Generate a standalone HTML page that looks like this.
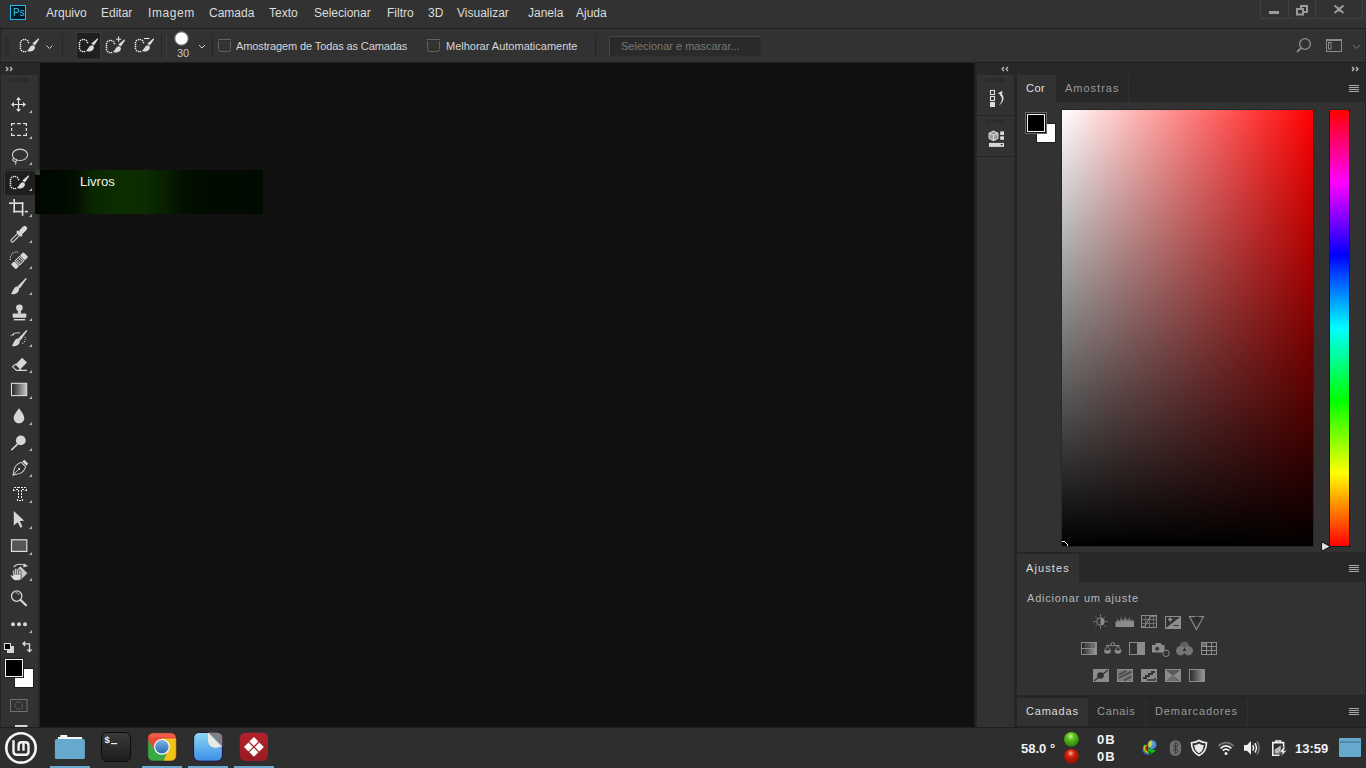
<!DOCTYPE html>
<html><head><meta charset="utf-8">
<style>
*{margin:0;padding:0;box-sizing:border-box}
html,body{width:1366px;height:768px;overflow:hidden;background:#111;font-family:"Liberation Sans",sans-serif}
.a{position:absolute}
.t{position:absolute;white-space:nowrap;line-height:1}
svg{position:absolute;overflow:visible}
</style></head><body>
<!-- menu bar -->
<div class="a" style="left:0;top:0;width:1366px;height:28px;background:#323232"></div>
<div class="a" style="left:0;top:28px;width:1366px;height:1px;background:#1e1e1e"></div>
<!-- PS logo -->
<div class="a" style="left:10px;top:5px;width:16px;height:15px;background:#001a24;border:1.5px solid #2ab8ec"></div>
<div class="t" style="left:13px;top:7.5px;font-size:10px;color:#34c0f0">Ps</div>
<div id="menu" style="font-size:12px;color:#dcdcdc">
<div class="t" style="left:46px;top:7px">Arquivo</div>
<div class="t" style="left:101px;top:7px">Editar</div>
<div class="t" style="left:148px;top:7px;letter-spacing:.6px">Imagem</div>
<div class="t" style="left:209px;top:7px">Camada</div>
<div class="t" style="left:269px;top:7px">Texto</div>
<div class="t" style="left:314px;top:7px">Selecionar</div>
<div class="t" style="left:387px;top:7px">Filtro</div>
<div class="t" style="left:428px;top:7px">3D</div>
<div class="t" style="left:457px;top:7px">Visualizar</div>
<div class="t" style="left:528px;top:7px">Janela</div>
<div class="t" style="left:576px;top:7px">Ajuda</div>
</div>
<!-- options bar -->
<div class="a" style="left:0;top:29px;width:1366px;height:33px;background:#323232"></div>
<div class="a" style="left:0;top:62px;width:1366px;height:1px;background:#1e1e1e"></div>
<div class="a" style="left:0;top:29px;width:1px;height:33px;background:#262626"></div>
<div class="a" style="left:1365px;top:29px;width:1px;height:33px;background:#262626"></div>
<!-- grip -->
<svg style="left:0;top:0" width="1366" height="768">
<defs>
<g id="qs">
 <g fill="#ececec">
 <circle cx="2.5" cy="3.5" r=".85"/><circle cx="4.5" cy="2.5" r=".85"/><circle cx="6.5" cy="2.5" r=".85"/><circle cx="8.5" cy="3.5" r=".85"/><circle cx="9.5" cy="5.5" r=".85"/>
 <circle cx="1.5" cy="5.5" r=".85"/><circle cx="1.5" cy="7.5" r=".85"/><circle cx="1.5" cy="9.5" r=".85"/><circle cx="1.5" cy="11.5" r=".85"/><circle cx="2.5" cy="13.5" r=".85"/><circle cx="4.5" cy="14.5" r=".85"/><circle cx="6.5" cy="14.5" r=".85"/>
 </g>
 <path fill="#dadada" d="M18.4,2.2 L19.2,1.6 C19.8,1.3 20.3,1.8 20,2.4 L15.9,8.4 L13.3,6.6 Z M15.4,9 C16.6,10.9 15.7,13.1 13.4,13.9 C11.8,14.5 9.8,14.5 8,14.3 C9.2,13 10.1,11 11.4,9.6 C12.7,8.3 14.5,7.8 15.4,9 Z"/>
</g>
</defs>
<g stroke="#262626" stroke-width="1">
 <line x1="5" y1="36.5" x2="9" y2="36.5"/><line x1="5" y1="38.5" x2="9" y2="38.5"/><line x1="5" y1="40.5" x2="9" y2="40.5"/><line x1="5" y1="42.5" x2="9" y2="42.5"/><line x1="5" y1="44.5" x2="9" y2="44.5"/><line x1="5" y1="46.5" x2="9" y2="46.5"/><line x1="5" y1="48.5" x2="9" y2="48.5"/><line x1="5" y1="50.5" x2="9" y2="50.5"/><line x1="5" y1="52.5" x2="9" y2="52.5"/><line x1="5" y1="54.5" x2="9" y2="54.5"/>
</g>
<use href="#qs" x="19" y="37"/>
<path d="M46.5,45.5 L49.5,48.5 L52.5,45.5" fill="none" stroke="#cfcfcf" stroke-width="1"/>
<line x1="62.5" y1="34" x2="62.5" y2="57" stroke="#262626"/>
<rect x="76.5" y="32.5" width="24" height="26.5" fill="#1f1f1f" stroke="#3a3a3a" stroke-width="1"/>
<use href="#qs" x="78" y="37"/>
<use href="#qs" x="105" y="38"/>
<path d="M118.6,36.5 V41.8 M116,39.2 H121.2" stroke="#e6e6e6" stroke-width="1.1"/>
<use href="#qs" x="134" y="37"/>
<path d="M144,38.5 H149.5" stroke="#e6e6e6" stroke-width="1.1"/>
<line x1="161.5" y1="34" x2="161.5" y2="57" stroke="#262626"/>
<line x1="166.5" y1="33" x2="166.5" y2="58" stroke="#3c3c3c"/>
<circle cx="181.5" cy="38.5" r="6.2" fill="#fff"/>
<circle cx="181.5" cy="38.5" r="6.8" fill="none" stroke="#ffffff" stroke-opacity=".35" stroke-width="1"/>
<path d="M199,45 L202,48 L205,45" fill="none" stroke="#cfcfcf" stroke-width="1"/>
<line x1="212.5" y1="34" x2="212.5" y2="57" stroke="#262626"/>
<g fill="#626262"><rect x="218" y="39" width="13" height="1"/><rect x="218" y="41" width="1" height="8"/><rect x="230" y="41" width="1" height="8"/><rect x="220" y="51" width="9" height="1"/><rect x="218" y="50" width="2" height="1"/><rect x="229" y="50" width="2" height="1"/></g>
<g fill="#626262"><rect x="427" y="39" width="13" height="1"/><rect x="427" y="41" width="1" height="8"/><rect x="439" y="41" width="1" height="8"/><rect x="429" y="51" width="9" height="1"/><rect x="427" y="50" width="2" height="1"/><rect x="438" y="50" width="2" height="1"/></g>
<line x1="595.5" y1="34" x2="595.5" y2="57" stroke="#262626"/>
<rect x="609" y="36" width="152" height="20" fill="#2a2a2a"/><path d="M609.5,56 V36.5 H761" fill="none" stroke="#474747"/><path d="M610,55.5 H760.5 V37" fill="none" stroke="#2c2c2c"/>
<!-- right icons -->
<circle cx="1305" cy="44" r="5.4" fill="none" stroke="#8a8a8a" stroke-width="1.4"/>
<path d="M1301.2,47.8 L1297.5,51.5" stroke="#8a8a8a" stroke-width="1.8" stroke-linecap="round"/>
<rect x="1326.5" y="39.5" width="15" height="12" fill="none" stroke="#8a8a8a" stroke-width="1"/>
<rect x="1326" y="39" width="16" height="2" fill="#8a8a8a"/>
<rect x="1328.5" y="42.5" width="2.5" height="6.5" fill="none" stroke="#8a8a8a" stroke-width="1"/>
<path d="M1353,45 L1356.5,48.5 L1360,45" fill="none" stroke="#777" stroke-width="1"/>
<!-- window controls -->
<path d="M1260.5,0 V18.5 H1362.5 V0 M1288.5,0 V18.5 M1315.5,0 V18.5" fill="none" stroke="#414141" stroke-width="1"/>
<rect x="1269" y="11" width="10" height="3" fill="#9a9a9a"/>
<rect x="1301" y="6" width="6" height="6" fill="none" stroke="#9a9a9a" stroke-width="2"/>
<rect x="1297" y="9" width="6" height="5.5" fill="#323232" stroke="#9a9a9a" stroke-width="2"/>
<path d="M1334.5,5.5 L1343.5,13 M1343.5,5.5 L1334.5,13" stroke="#9a9a9a" stroke-width="2"/>
<rect x="1337" y="7.5" width="4" height="4" fill="#9a9a9a"/>
</svg>
<div class="t" style="left:177px;top:48px;font-size:11px;color:#c4c8cc">30</div>
<div class="t" style="left:236px;top:41px;font-size:11px;color:#d6d6d6;letter-spacing:-0.12px">Amostragem de Todas as Camadas</div>
<div class="t" style="left:446px;top:41px;font-size:11px;color:#d6d6d6">Melhorar Automaticamente</div>
<div class="t" style="left:621px;top:41px;font-size:11px;color:#777">Selecionar e mascarar...</div>

<!-- toolbar -->
<div class="a" style="left:0;top:63px;width:40px;height:664px;background:#262626"></div>
<div class="a" style="left:1px;top:63px;width:37px;height:12px;background:#282828"></div>
<div class="a" style="left:1px;top:75px;width:37px;height:652px;background:#323232"></div>

<svg style="left:0;top:0" width="40" height="727">
<g fill="#b5b5b5"><path d="M32,110 V113 H29 Z"/><path d="M32,136 V139 H29 Z"/><path d="M32,162 V165 H29 Z"/><path d="M32,188 V191 H29 Z"/><path d="M32,214 V217 H29 Z"/><path d="M32,240 V243 H29 Z"/><path d="M32,266 V269 H29 Z"/><path d="M32,292 V295 H29 Z"/><path d="M32,318 V321 H29 Z"/><path d="M32,344 V347 H29 Z"/><path d="M32,370 V373 H29 Z"/><path d="M32,396 V399 H29 Z"/><path d="M32,422 V425 H29 Z"/><path d="M32,448 V451 H29 Z"/><path d="M32,474 V477 H29 Z"/><path d="M32,500 V503 H29 Z"/><path d="M32,526 V529 H29 Z"/><path d="M32,552 V555 H29 Z"/><path d="M32,578 V581 H29 Z"/><path d="M32,630 V633 H29 Z"/></g>
<!-- >> -->
<path d="M6,67 L8,69 L6,71 M10,67 L12,69 L10,71" fill="none" stroke="#bdbdbd" stroke-width="1.3"/>
<g stroke="#262626"><path d="M10.5,78 V82 M12.5,78 V82 M14.5,78 V82 M16.5,78 V82 M18.5,78 V82 M20.5,78 V82 M22.5,78 V82 M24.5,78 V82 M26.5,78 V82 M28.5,78 V82"/></g>
<g fill="#dedede" stroke="none">
<!-- move -->
<path d="M18.5,97 L21,100 H19.1 V103.9 H23 V102 L26,104.5 L23,107 V105.1 H19.1 V109 H21 L18.5,112 L16,109 H17.9 V105.1 H14 V107 L11,104.5 L14,102 V103.9 H17.9 V100 H16 Z"/>
</g>
<g fill="#e0e0e0">
<!-- marquee -->
<rect x="11" y="123" width="4" height="1.2"/><rect x="17" y="123" width="4" height="1.2"/><rect x="23" y="123" width="4" height="1.2"/>
<rect x="11" y="134.8" width="4" height="1.2"/><rect x="17" y="134.8" width="4" height="1.2"/><rect x="23" y="134.8" width="4" height="1.2"/>
<rect x="11" y="123" width="1.2" height="3"/><rect x="11" y="128" width="1.2" height="3"/><rect x="11" y="133" width="1.2" height="3"/>
<rect x="25.8" y="123" width="1.2" height="3"/><rect x="25.8" y="128" width="1.2" height="3"/><rect x="25.8" y="133" width="1.2" height="3"/>
</g>
<!-- lasso -->
<g fill="none" stroke="#d4d4d4" stroke-width="1.1">
<ellipse cx="20" cy="154.8" rx="7.6" ry="5.7"/>
<path d="M14.5,158.5 C12,158.5 12.3,161.5 15,161.5 C17,161.5 17,159.5 15.8,159 M15.5,161.5 C16.2,162.5 16,163.8 15,164.3"/>
</g>
<!-- quick selection active button -->
<rect x="5" y="170" width="30" height="25" fill="#1f1f1f"/>
<rect x="5" y="169" width="30" height="1" fill="#232323"/><rect x="5" y="170" width="30" height="1" fill="#3a3a3a"/>
<rect x="3" y="170" width="1" height="25" fill="#262626"/><rect x="4" y="170" width="1" height="25" fill="#3a3a3a"/>
<use href="#qs" x="9" y="174"/>
<path d="M32,188 V191 H29 Z" fill="#b5b5b5"/>
<!-- crop -->
<g fill="#e2e2e2">
<rect x="9" y="202.4" width="4.4" height="1.6"/><rect x="13.4" y="199" width="1.6" height="13.4"/><rect x="13.4" y="210.8" width="10" height="1.6"/><rect x="21.8" y="202.4" width="1.6" height="13.4"/><rect x="15" y="202.4" width="8.4" height="1.6"/><rect x="24.8" y="210.8" width="3" height="1.6"/>
</g>
<!-- eyedropper -->
<g transform="rotate(-45 19 234)">
<rect x="8.3" y="232.6" width="10.5" height="2.8" rx="1.4" fill="none" stroke="#d8d8d8" stroke-width="1.1"/>
<rect x="18.3" y="230.6" width="2.6" height="6.8" fill="#d8d8d8"/>
<rect x="20.4" y="231.6" width="9" height="4.8" rx="2.2" fill="#d8d8d8"/>
</g>
<!-- healing -->
<g transform="rotate(-45 19.6 260.7)">
<rect x="23.6" y="257.2" width="4.8" height="7" rx="1.3" fill="#d8d8d8"/>
<rect x="10.8" y="257.2" width="4.6" height="7" rx="1.3" fill="#d8d8d8"/>
<rect x="16.5" y="257.7" width="6.2" height="6" fill="none" stroke="#d8d8d8" stroke-width="1"/>
<g fill="#d8d8d8"><circle cx="18.4" cy="259.6" r=".85"/><circle cx="20.8" cy="259.6" r=".85"/><circle cx="18.4" cy="261.8" r=".85"/><circle cx="20.8" cy="261.8" r=".85"/></g>
</g>
<g fill="#d8d8d8"><circle cx="10.2" cy="259.4" r=".65"/><circle cx="10.4" cy="257" r=".65"/><circle cx="11.4" cy="254.8" r=".65"/><circle cx="13" cy="253" r=".65"/><circle cx="15" cy="252.1" r=".65"/><circle cx="17.2" cy="251.9" r=".65"/></g>
<!-- brush -->
<g fill="#d6d6d6">
<path d="M25.5,278.2 C26,277.8 26.8,278.4 26.5,279 L19.75,288.4 L17.45,286.4 Z"/>
<path d="M17.6,286.6 C19.8,287.8 19.5,291.3 17.2,292.9 C15.4,294.1 12.8,294.4 10.9,294 C12.3,292.6 12.8,290.2 14.2,288.3 C15.2,287 16.5,286.1 17.6,286.6 Z"/>
</g>
<!-- stamp -->
<g fill="#d6d6d6">
<circle cx="19.4" cy="307.8" r="3.3"/>
<path d="M18.2,310 H20.6 L21.2,313.6 H17.6 Z"/>
<rect x="12.7" y="313.6" width="13.6" height="4.1" rx=".6"/>
<rect x="13.9" y="319" width="11.2" height="1.4"/>
</g>
<!-- history brush -->
<g fill="#d6d6d6">
<path d="M26.2,330.2 C26.7,329.8 27.5,330.4 27.2,331 L20.45,340.4 L18.15,338.4 Z"/>
<path d="M18.4,338.6 C20.6,339.8 20.3,343.3 18,344.9 C16.2,346.1 13.6,346.4 11.7,346 C13.1,344.6 13.6,342.2 15,340.3 C16,339 17.3,338.1 18.4,338.6 Z"/>
<path d="M10,335.8 L14,333.2 V335.2 Z"/>
<circle cx="25.2" cy="337.5" r=".6"/><circle cx="25.3" cy="339.6" r=".6"/><circle cx="24.5" cy="341.6" r=".6"/><circle cx="22.8" cy="343.2" r=".6"/>
</g>
<path d="M13,334.2 C15,332.8 17.5,332.6 20,333" fill="none" stroke="#d6d6d6" stroke-width="1"/>
<!-- eraser -->
<path d="M22.2,357.8 L27,362.6 L20.6,369 L15.8,364.2 Z" fill="#d6d6d6"/>
<path d="M15.8,364.2 L20.6,369 L18.6,370.4 H16.3 L12.5,366.6 Z M18.6,370.4 H27" fill="none" stroke="#d6d6d6" stroke-width="1.1"/>
<!-- gradient -->
<defs><linearGradient id="gr" x1="0" x2="1"><stop offset="0" stop-color="#222"/><stop offset="1" stop-color="#c8c8c8"/></linearGradient></defs>
<rect x="11.5" y="383.3" width="15.2" height="12.3" fill="url(#gr)" stroke="#dcdcdc" stroke-width="1.1"/>
<!-- drop -->
<path d="M19,408 C20.5,411 24.3,414.5 24.3,418 C24.3,421.2 21.8,423.3 19,423.3 C16.2,423.3 13.7,421.2 13.7,418 C13.7,414.5 17.5,411 19,408 Z" fill="#d6d6d6"/>
<!-- dodge -->
<circle cx="20.8" cy="440.4" r="4.9" fill="#d6d6d6"/>
<path d="M17.5,444.2 L11.8,449.6" stroke="#d6d6d6" stroke-width="1.6" stroke-linecap="round"/>
<!-- pen -->
<g transform="rotate(45 19.5 468.5) translate(19.5 468.5) scale(.88) translate(-19.5 -468.5)">
<rect x="16.3" y="457.6" width="6.4" height="3.2" fill="#d8d8d8"/>
<path d="M15.9,462.2 H23.1 C24.9,465.6 25.1,469.4 23.6,472.6 L19.5,479 L15.4,472.6 C13.9,469.4 14.1,465.6 15.9,462.2 Z" fill="none" stroke="#d8d8d8" stroke-width="1.1"/>
<path d="M19.5,470 V478.5" stroke="#d8d8d8" stroke-width="1"/>
<circle cx="19.5" cy="469.2" r="1.3" fill="#d8d8d8"/>
</g>
<!-- type mask -->
<g fill="#ececec"><rect x="14" y="487" width="2" height="1"/><rect x="17" y="487" width="3" height="1"/><rect x="21" y="487" width="2" height="1"/><rect x="24" y="487" width="2" height="1"/><rect x="13" y="489" width="1" height="2"/><rect x="14" y="490" width="1" height="1"/><rect x="16" y="489" width="2" height="1"/><rect x="18" y="490" width="1" height="2"/><rect x="22" y="489" width="2" height="1"/><rect x="21" y="490" width="1" height="2"/><rect x="26" y="489" width="1" height="2"/><rect x="25" y="490" width="1" height="1"/><rect x="18" y="493" width="1" height="2"/><rect x="18" y="496" width="1" height="2"/><rect x="21" y="493" width="1" height="2"/><rect x="21" y="496" width="1" height="2"/><rect x="17" y="499" width="1" height="2"/><rect x="19" y="500" width="2" height="1"/><rect x="22" y="499" width="1" height="2"/></g>
<!-- path select -->
<path d="M13.8,511 L24.2,520.8 L19.8,521 L22.4,526.8 L20.4,527.8 L17.8,522.2 L13.8,525.5 Z" fill="#d6d6d6"/>
<!-- rect -->
<rect x="11.5" y="539.8" width="15.3" height="11.6" fill="#555" stroke="#dcdcdc" stroke-width="1.2"/>
<!-- hand rotate -->
<path d="M20.3,566.2 L27.4,573.2 L20.3,580.2 L13.3,573.2 Z" fill="#c8c8c8"/>
<path d="M13.6,567.2 C15.5,564.6 19.5,563.4 24.2,565.2" fill="none" stroke="#cfcfcf" stroke-width="1.1"/>
<path d="M23.6,563.2 L28.2,565.9 L23.4,567.6 Z" fill="#cfcfcf"/>
<g fill="#e0e0e0" stroke="#323232" stroke-width=".7">
<rect x="12.8" y="570" width="2.2" height="8" rx="1.1"/>
<rect x="14.8" y="568.2" width="2.2" height="9" rx="1.1"/>
<rect x="16.8" y="568.6" width="2.2" height="9" rx="1.1"/>
<rect x="18.8" y="570.2" width="2.2" height="8" rx="1.1"/>
<path d="M12.8,575 H21 V577.5 C21,579.4 19.6,580.6 17.6,580.6 H15.8 C14.3,580.6 13.3,579.8 12.4,578.6 L10.6,576.2 C10.1,575.4 10.9,574.6 11.7,575.1 L12.8,575.9 Z"/>
</g>
<rect x="13.3" y="574.6" width="7.4" height="2.2" fill="#e0e0e0"/>
<!-- zoom -->
<circle cx="16.7" cy="596.1" r="5.2" fill="none" stroke="#d6d6d6" stroke-width="1.3"/>
<path d="M20.6,600 L26,605.2" stroke="#d6d6d6" stroke-width="2.2" stroke-linecap="round"/>
<path d="M15.5,592.8 C17,592.6 18.6,593.6 19.2,595" fill="none" stroke="#d6d6d6" stroke-width=".8"/>
<!-- dots -->
<g fill="#d6d6d6"><circle cx="13" cy="624.2" r="2"/><circle cx="19" cy="624.2" r="2"/><circle cx="25" cy="624.2" r="2"/></g>
<!-- mini swatches -->
<rect x="7" y="646" width="7" height="7" fill="#d6d6d6"/>
<rect x="4.5" y="643.5" width="6" height="6" fill="#000" stroke="#dcdcdc" stroke-width="1"/>
<path d="M23.5,643.8 H29.5 V650.5" fill="none" stroke="#dcdcdc" stroke-width="1.3"/>
<path d="M25.2,640.8 L22,643.8 L25.2,646.8 Z M26.5,649.5 L29.5,652.6 L32.5,649.5 Z" fill="#dcdcdc"/>
<!-- fg/bg -->
<rect x="14.5" y="668.5" width="19" height="19" fill="#fff" stroke="#1e1e1e" stroke-width="1"/>
<rect x="4.5" y="658.5" width="19" height="19" fill="#000" stroke="#1e1e1e" stroke-width="1"/>
<rect x="5.5" y="659.5" width="17" height="17" fill="#000" stroke="#f4f4f4" stroke-width="1"/>
<!-- quick mask -->
<rect x="10.5" y="699.5" width="16.5" height="12" fill="none" stroke="#707070" stroke-width="1"/>
<circle cx="18.75" cy="705.5" r="3.8" fill="none" stroke="#8a8a8a" stroke-width=".9" stroke-dasharray=".9 1.1"/>
<rect x="15" y="725" width="12.4" height="2" fill="#d6d6d6"/>
</svg>

<!-- canvas -->
<div class="a" style="left:40px;top:63px;width:934px;height:664px;background:#111"></div>
<div class="a" style="left:974px;top:63px;width:1px;height:664px;background:#1c1c1c"></div>
<div class="a" style="left:975px;top:63px;width:1px;height:664px;background:#2a2a2a"></div>
<div class="a" style="left:976px;top:63px;width:1px;height:664px;background:#202020"></div>

<!-- right dock -->
<div class="a" style="left:975px;top:63px;width:391px;height:664px;background:#262626"></div>
<div class="a" style="left:977px;top:63px;width:389px;height:12px;background:#282828"></div>
<div class="a" style="left:977px;top:75px;width:37px;height:40px;background:#323232"></div>
<div class="a" style="left:977px;top:116px;width:37px;height:40px;background:#323232"></div>
<div class="a" style="left:977px;top:157px;width:37px;height:570px;background:#323232"></div>

<!-- Cor panel -->
<div class="a" style="left:1017px;top:75px;width:348px;height:27px;background:#282828"></div>
<div class="a" style="left:1017px;top:75px;width:39px;height:27px;background:#323232"></div>
<div class="a" style="left:1017px;top:102px;width:348px;height:450px;background:#323232"></div>

<!-- Ajustes panel -->
<div class="a" style="left:1017px;top:554px;width:348px;height:28px;background:#282828"></div>
<div class="a" style="left:1017px;top:554px;width:62px;height:28px;background:#323232"></div>
<div class="a" style="left:1017px;top:582px;width:348px;height:113px;background:#323232"></div>

<!-- Camadas panel -->
<div class="a" style="left:1017px;top:698px;width:348px;height:28px;background:#282828"></div>
<div class="a" style="left:1017px;top:698px;width:71px;height:28px;background:#323232"></div>

<svg style="left:0;top:0" width="1366" height="768">
<defs>
<linearGradient id="wh" x1="0" x2="1"><stop offset="0" stop-color="#fff"/><stop offset="1" stop-color="#fff" stop-opacity="0"/></linearGradient>
<linearGradient id="bk" x1="0" y1="0" x2="0" y2="1"><stop offset="0" stop-color="#000" stop-opacity="0"/><stop offset="1" stop-color="#000"/></linearGradient>
<linearGradient id="hue" x1="0" y1="0" x2="0" y2="1"><stop offset="0" stop-color="#f00"/><stop offset=".1667" stop-color="#f0f"/><stop offset=".3333" stop-color="#00f"/><stop offset=".5" stop-color="#0ff"/><stop offset=".6667" stop-color="#0f0"/><stop offset=".8333" stop-color="#ff0"/><stop offset="1" stop-color="#f00"/></linearGradient>
</defs>
<!-- header arrows -->
<path d="M1004,67 L1002,69 L1004,71 M1008,67 L1006,69 L1008,71" fill="none" stroke="#bdbdbd" stroke-width="1.3"/>
<path d="M1352,67 L1354,69 L1352,71 M1356,67 L1358,69 L1356,71" fill="none" stroke="#bdbdbd" stroke-width="1.3"/>
<!-- column grips -->
<g stroke="#262626"><path d="M986.5,78 V82 M988.5,78 V82 M990.5,78 V82 M992.5,78 V82 M994.5,78 V82 M996.5,78 V82 M998.5,78 V82 M1000.5,78 V82 M1002.5,78 V82 M1004.5,78 V82"/>
<path d="M986.5,119 V123 M988.5,119 V123 M990.5,119 V123 M992.5,119 V123 M994.5,119 V123 M996.5,119 V123 M998.5,119 V123 M1000.5,119 V123 M1002.5,119 V123 M1004.5,119 V123"/></g>
<!-- history icon -->
<g fill="none" stroke="#dcdcdc" stroke-width="1.1"><rect x="990.5" y="90.5" width="4" height="4"/><rect x="990.5" y="96.5" width="4" height="4"/></g>
<rect x="990" y="102" width="5" height="5" fill="#dcdcdc"/>
<path d="M997.8,93.2 L1002.4,90.8 L1002,95.6 Z" fill="#dcdcdc"/>
<path d="M1000.6,93.4 C1004.6,95 1005.2,101.2 998.8,105.6 C1002.6,101.2 1002.8,96.6 999.8,95.4 Z" fill="#dcdcdc"/>
<!-- 3D icon -->
<path d="M993.5,131 L998,133.2 V138.5 L993.5,140.7 L989,138.5 V133.2 Z" fill="#9a9a9a" stroke="#dcdcdc" stroke-width="1"/>
<path d="M989,133.2 L993.5,135.4 L998,133.2 M993.5,135.4 V140.7" fill="none" stroke="#dcdcdc" stroke-width="1"/>
<rect x="1000.2" y="131.4" width="3.8" height="3.6" fill="#dcdcdc"/><rect x="1000.2" y="136.3" width="3.8" height="3.5" fill="#dcdcdc"/>
<rect x="989" y="142.9" width="15" height="4" fill="#d6d6d6"/>
<path d="M1000.3,144 H1003 L1001.65,145.8 Z" fill="#333"/>
<!-- Cor panel tab separators -->
<line x1="1128.5" y1="75" x2="1128.5" y2="102" stroke="#2f2f2f"/>
<!-- menu icons -->
<g stroke="#aaa" stroke-width="1"><path d="M1349,85.5 H1359 M1349,87.5 H1359 M1349,89.5 H1359 M1349,91.5 H1359"/>
<path d="M1349,565.5 H1359 M1349,567.5 H1359 M1349,569.5 H1359 M1349,571.5 H1359"/>
<path d="M1349,708.5 H1359 M1349,710.5 H1359 M1349,712.5 H1359 M1349,714.5 H1359"/></g>
<!-- swatches -->
<rect x="1036" y="123" width="20" height="20" fill="#1e1e1e"/>
<rect x="1037" y="124" width="18" height="18" fill="#fff"/>
<rect x="1025" y="112" width="22" height="22" fill="#6a6a6a"/>
<rect x="1026" y="113" width="20" height="20" fill="#111"/>
<rect x="1027" y="114" width="18" height="18" fill="#f4f4f4"/>
<rect x="1028" y="115" width="16" height="16" fill="#000"/>
<!-- color field -->
<rect x="1061.5" y="109.5" width="252" height="437" fill="#152020"/>
<rect x="1062" y="110" width="251" height="436" fill="#f00"/>
<rect x="1062" y="110" width="251" height="436" fill="url(#wh)"/>
<rect x="1062" y="110" width="251" height="436" fill="url(#bk)"/>
<g fill="#fff"><rect x="1062" y="541" width="3" height="1"/><rect x="1065" y="542" width="1" height="1"/><rect x="1066" y="543" width="1" height="1"/><rect x="1067" y="544" width="1" height="2"/></g>
<!-- hue slider -->
<rect x="1329" y="109.5" width="21" height="437.5" fill="#152020"/>
<rect x="1330" y="110" width="19" height="436" fill="url(#hue)"/>
<path d="M1322.5,543 L1329,546.5 L1322.5,550 Z" fill="#151515" stroke="#151515" stroke-width="2.6" stroke-linejoin="round"/><path d="M1322.5,543.2 L1328.6,546.5 L1322.5,549.8 Z" fill="#e4e4e4" stroke="#e4e4e4" stroke-width=".9" stroke-linejoin="round"/>
<!-- camadas tabs separators -->
<line x1="1145.5" y1="698" x2="1145.5" y2="726" stroke="#2f2f2f"/>
<line x1="1247.5" y1="698" x2="1247.5" y2="726" stroke="#2f2f2f"/>
<!-- adjustment icons -->
<defs>
<radialGradient id="vib" cx=".5" cy=".3" r=".5"><stop offset="0" stop-color="#222"/><stop offset="1" stop-color="#333" stop-opacity="0"/></radialGradient>
<linearGradient id="gm" x1="0" x2="1"><stop offset="0" stop-color="#2a2a2a"/><stop offset="1" stop-color="#999"/></linearGradient>
<linearGradient id="hsl1" x1="0" x2="1"><stop offset="0" stop-color="#222"/><stop offset="1" stop-color="#8c8c8c"/></linearGradient>
</defs>
<g fill="none" stroke="#8c8c8c" stroke-width="1">
 <circle cx="1100.5" cy="621.5" r="3.8"/>
 <path d="M1100.5,614.5 V616.3 M1100.5,626.7 V628.5 M1093.5,621.5 H1095.3 M1105.7,621.5 H1107.5 M1095.6,616.6 L1096.6,617.6 M1104.4,625.4 L1105.4,626.4 M1105.4,616.6 L1104.4,617.6 M1096.6,625.4 L1095.6,626.4"/>
 <rect x="1141.5" y="615.5" width="15" height="12"/>
 <path d="M1141.5,619.5 H1156.5 M1141.5,623.5 H1156.5 M1145.5,615.5 V627.5 M1149.5,615.5 V627.5 M1153.5,615.5 V627.5" stroke="#6e6e6e"/>
 <path d="M1142,627 C1147.5,627 1147.5,616 1153,616 H1156" stroke="#9a9a9a"/>
 <rect x="1165.5" y="616.5" width="15" height="12"/>
 <path d="M1189.5,616.5 H1203.5 L1196.5,629.5 Z" stroke-width="1.2"/>
 <rect x="1081.5" y="642.5" width="15" height="12"/>
 <rect x="1129.5" y="642.5" width="15" height="12"/>
 <rect x="1201.5" y="642.5" width="15" height="12"/>
 <path d="M1201.5,646.5 H1216.5 M1201.5,650.5 H1216.5 M1206.5,642.5 V654.5 M1211.5,642.5 V654.5"/>
 <rect x="1093.5" y="669.5" width="15" height="12"/>
 <rect x="1117.5" y="669.5" width="15" height="12"/>
 <rect x="1141.5" y="669.5" width="15" height="12"/>
 <rect x="1165.5" y="669.5" width="15" height="12"/>
 <rect x="1189.5" y="669.5" width="15" height="12"/>
 <path d="M1106,645.5 H1119.5 M1104.5,650.5 L1107.5,645.5 L1110.5,650.5 M1115,650.5 L1118,645.5 L1121,650.5" stroke-width=".9"/>
 <circle cx="1112.8" cy="644.3" r="1.8" fill="#333"/>
</g>
<g fill="#8c8c8c">
 <path d="M1100.5,617.7 A3.8,3.8 0 0 1 1100.5,625.3 Z"/>
 <path d="M1115.5,627 V621 L1116.5,622.5 L1117.3,618 L1118.2,622 L1119,619.5 L1120,622 L1121,616 L1122,621.5 L1123,618.5 L1124,621.5 L1125,615.5 L1126,621 L1127,618 L1128,622 L1129,617 L1130,621.5 L1131,618.5 L1132,622 L1133,619.5 L1134,621.5 V627 Z"/>
 <path d="M1166,628 L1180,617 V628 Z"/>
 <path d="M1197,621 m-5.5,0 a5.5,5 0 1,0 11,0 a5.5,5 0 1,0 -11,0" fill="url(#vib)"/>
 <path d="M1104,650.3 H1111 A3.5,3.5 0 0 1 1104,650.3 Z M1114.5,650.3 H1121.5 A3.5,3.5 0 0 1 1114.5,650.3 Z"/>
 <path d="M1137,643 H1144 V654 H1137 Z"/>
 <path d="M1152,645 H1155 L1156.3,643 H1160.7 L1162,645 H1164.5 V652.5 H1152 Z"/>
 <circle cx="1166" cy="653.3" r="3.2" fill="#333" stroke="#8c8c8c" stroke-width="1"/>
 <circle cx="1157.2" cy="648.8" r="2.4" fill="#333" stroke="#8c8c8c" stroke-width="1"/>
 <circle cx="1184.5" cy="646" r="4.6" fill="#5e5e5e"/><circle cx="1180.6" cy="650.8" r="4.6" fill="#808080" opacity=".85"/><circle cx="1188.4" cy="650.8" r="4.6" fill="#808080" opacity=".85"/>
 <path d="M1184.5,647.5 L1186.5,651 H1182.5 Z" fill="#2e2e2e"/>
 <rect x="1202" y="643" width="4" height="3" fill="#6e6e6e"/>
 <path d="M1094,670 H1108 V681 H1094 Z"/>
 <path d="M1118,670 H1132 V681 H1118 Z" fill="#777"/>
 <path d="M1142,670 H1156 V681 H1142 Z"/>
 <path d="M1166,670 L1173,675.5 L1166,681 Z M1180,670 L1173,675.5 L1180,681 Z" fill="#8c8c8c"/>
 <path d="M1166,670 H1180 L1173,675.5 Z" fill="#5a5a5a"/><path d="M1166,681 H1180 L1173,675.5 Z" fill="#6e6e6e"/>
</g>
<path d="M1168.5,619.5 H1172.5 M1170.5,617.5 V621.5" stroke="#8c8c8c" stroke-width="1"/>
<path d="M1168,619.5 H1172 M1170,617.5 V621.5" stroke="#9a9a9a" stroke-width="1.1"/>
<path d="M1173.5,625.5 H1178.5" stroke="#3a3a3a" stroke-width="1.1"/>
<rect x="1082" y="643" width="14" height="5" fill="url(#hsl1)"/>
<path d="M1085.5,643 V648 M1089.5,643 V648 M1093.5,643 V648" stroke="#555" stroke-width="1"/>
<rect x="1082" y="648" width="14" height="6" fill="url(#gm)"/>
<path d="M1081.5,648.5 H1096.5" stroke="#8c8c8c"/>
<rect x="1190" y="670" width="14" height="11" fill="url(#gm)"/>
<circle cx="1100.5" cy="675.5" r="3.3" fill="#333"/>
<path d="M1094,681 L1108,670" stroke="#333" stroke-width="1.2"/>
<path d="M1094,681 L1108,670" stroke="#8c8c8c" stroke-width=".5" opacity=".0"/>
<path d="M1118.5,678 L1131.5,671.5 M1118.5,675 L1126,671 M1124,680.5 L1131.5,676.5" stroke="#4a4a4a" stroke-width="1.5"/>
<path d="M1143,678 H1146 V676 H1149 V674 H1152 V672 H1155" fill="none" stroke="#333" stroke-width="2"/>
<path d="M1147,680 H1155 V678" fill="none" stroke="#333" stroke-width="1.5"/>
</svg>
<div class="t" style="left:1026px;top:83px;font-size:11px;color:#e0e0e0;letter-spacing:.5px">Cor</div>
<div class="t" style="left:1065px;top:83px;font-size:11px;color:#9a9a9a;letter-spacing:1px">Amostras</div>
<div class="t" style="left:1026px;top:563px;font-size:11px;color:#dcdcdc;letter-spacing:1.1px">Ajustes</div>
<div class="t" style="left:1027px;top:593px;font-size:11px;color:#b3b8be;letter-spacing:.8px">Adicionar um ajuste</div>
<div class="t" style="left:1026px;top:706px;font-size:11px;color:#dcdcdc;letter-spacing:.8px">Camadas</div>
<div class="t" style="left:1097px;top:706px;font-size:11px;color:#9a9a9a;letter-spacing:.7px">Canais</div>
<div class="t" style="left:1155px;top:706px;font-size:11px;color:#9a9a9a;letter-spacing:.9px">Demarcadores</div>

<!-- taskbar -->
<div class="a" style="left:0;top:727px;width:1366px;height:1px;background:#1f1f1f"></div>
<div class="a" style="left:0;top:728px;width:1366px;height:40px;background:#2e2e2e"></div>
<svg style="left:0;top:0" width="1366" height="768">
<defs>
<linearGradient id="term" x1="0" y1="0" x2="0" y2="1"><stop offset="0" stop-color="#3a3a3a"/><stop offset="1" stop-color="#1c1c1c"/></linearGradient>
<linearGradient id="doc" x1="0" y1="0" x2="0" y2="1"><stop offset="0" stop-color="#8ed8f2"/><stop offset="1" stop-color="#3b8ee8"/></linearGradient>
<linearGradient id="redg" x1="0" y1="0" x2="0" y2="1"><stop offset="0" stop-color="#b4222c"/><stop offset="1" stop-color="#961b23"/></linearGradient>
<linearGradient id="blueb" x1="0" y1="0" x2="0" y2="1"><stop offset="0" stop-color="#7db4e0"/><stop offset="1" stop-color="#2a6cb4"/></linearGradient>
<radialGradient id="gball" cx=".45" cy=".3" r=".7"><stop offset="0" stop-color="#c8f5a0"/><stop offset=".35" stop-color="#5cc21a"/><stop offset="1" stop-color="#2e7d0a"/></radialGradient>
<radialGradient id="rball" cx=".45" cy=".3" r=".7"><stop offset="0" stop-color="#f5b0a0"/><stop offset=".35" stop-color="#d0200c"/><stop offset="1" stop-color="#8a1006"/></radialGradient>
<clipPath id="chc"><rect x="147.8" y="732.7" width="28.5" height="28.3" rx="5.5"/></clipPath>
<clipPath id="docc"><rect x="193.6" y="732.4" width="28.8" height="28.8" rx="5.5"/></clipPath>
</defs>
<!-- mint -->
<circle cx="21" cy="747.9" r="14.7" fill="none" stroke="#f4f4f4" stroke-width="2.6"/>
<path d="M13.5,740.2 V751.6 C13.5,753.6 14.9,754.8 16.8,754.8 H25.7 C27.6,754.8 28.5,753.6 28.5,751.6 V745.4 C28.5,743.4 27.2,742.2 25.3,742.2 H21.6 C19.7,742.2 18.6,743.4 18.6,745.4 V750.8 M23.5,742.3 V750.8" fill="none" stroke="#f4f4f4" stroke-width="2.4"/>
<!-- folder -->
<path d="M60.2,736.9 V735.6 C60.2,735.2 60.6,734.9 61,734.9 H66.5 C66.9,734.9 67.3,735.2 67.3,735.6 V736.9 H82.1 V739 H57.9 V736.9 Z" fill="#f6f6f6"/>
<rect x="54.9" y="738.9" width="30" height="20.1" rx="1.5" fill="#67a9cc"/>
<!-- terminal -->
<rect x="101.6" y="732.5" width="29" height="29" rx="5.5" fill="url(#term)" stroke="#0c0c0c" stroke-width="1"/>
<text x="104.6" y="742.6" font-family="Liberation Sans" font-weight="bold" font-size="9.5" fill="#f0f0f0">$</text>
<rect x="111" y="743" width="6.2" height="1.2" fill="#f0f0f0"/>
<!-- chrome -->
<g clip-path="url(#chc)">
<rect x="147" y="732" width="30" height="30" fill="#e8493a"/>
<path d="M161.9,738.6 H177 V762 H163 L166.4,754.1 Z" fill="#f4c31a"/>
<path d="M147,738.6 L153.5,748.2 L166.4,754.1 L163,762 H147 Z" fill="#3aa845"/>
<rect x="147" y="732" width="30" height="5" fill="#ef6a55" opacity=".6"/>
</g>
<rect x="147.8" y="732.7" width="28.5" height="28.3" rx="5.5" fill="none" stroke="#1a1a1a" stroke-opacity=".6" stroke-width=".8"/>
<circle cx="161.9" cy="746.8" r="7.9" fill="#fff"/>
<circle cx="161.9" cy="746.8" r="6.8" fill="url(#blueb)"/>
<!-- doc -->
<rect x="193.6" y="732.4" width="28.8" height="28.8" rx="5.5" fill="url(#doc)" stroke="#2a0a30" stroke-width="1"/>
<g clip-path="url(#docc)">
<path d="M208,732 H223 V747 Z" fill="#808080"/>
<path d="M208,732.8 L222.2,747 C219,745.6 216.5,748.8 213.8,747.6 C209,746.5 207.5,742 208,737.5 Z" fill="#ece8e2"/>
</g>
<!-- red -->
<rect x="239.8" y="732.7" width="28.2" height="28.2" rx="5.5" fill="url(#redg)"/>
<g fill="#fff">
<path d="M253.9,737 L258.4,741.5 L253.9,746 L249.4,741.5 Z"/>
<path d="M259.3,742.4 L263.8,746.9 L259.3,751.4 L254.8,746.9 Z"/>
<path d="M248.5,742.4 L253,746.9 L248.5,751.4 L244,746.9 Z"/>
<path d="M253.9,747.8 L258.4,752.3 L253.9,756.8 L249.4,752.3 Z"/>
</g>
<!-- indicators -->
<g fill="#6aaad0"><rect x="50" y="766" width="40" height="2"/><rect x="142" y="766" width="40" height="2"/><rect x="188" y="766" width="40" height="2"/><rect x="234" y="766" width="40" height="2"/></g>
<!-- balls -->
<circle cx="1071.4" cy="739.3" r="7.4" fill="url(#gball)"/>
<circle cx="1071.4" cy="756.3" r="7.4" fill="url(#rball)"/>
<!-- IDM -->
<path d="M1142.59,749.41 A5.8,5.8 0 0 0 1149.80,754.00" fill="none" stroke="#4a50e0" stroke-width="1.4"/><path d="M1145.28,744.80 A4.7,4.7 0 0 0 1149.52,752.94" fill="none" stroke="#20c020" stroke-width="1.3"/><path d="M1146.50,745.28 A3.6,3.6 0 0 0 1149.53,751.78" fill="none" stroke="#f0d020" stroke-width="1.2"/><path d="M1147.41,745.96 A2.6,2.6 0 0 0 1149.40,750.76" fill="none" stroke="#e02818" stroke-width="1.1"/>
<circle cx="1152" cy="744.6" r="4.4" fill="#4a8ee6"/>
<path d="M1150.6,740.4 C1148,741.4 1147.6,745.5 1148.8,747.6 C1150.6,747.6 1152.6,746 1152.6,743.2 C1152.6,741.8 1151.6,740.6 1150.6,740.4 Z" fill="#c4d03a"/>
<path d="M1147.6,748 L1156,750.4 L1149.2,755.2 Z" fill="#14c014"/>
<path d="M1148.4,750 L1149.2,755.2 L1152,753.2 Z" fill="#0a6a0a"/>
<!-- bluetooth -->
<rect x="1169.8" y="740.2" width="11.3" height="15.8" rx="5.6" fill="#6e6e6e"/>
<path d="M1173,744.5 L1178,751.5 L1175.5,754 V742 L1178,744.5 L1173,751.5" fill="none" stroke="#3a3a3a" stroke-width="1"/>
<!-- shield -->
<path d="M1199,740.5 C1201.5,742.2 1204,742.8 1206.5,742.8 C1206.5,749.5 1203.5,753.5 1199,755.5 C1194.5,753.5 1191.5,749.5 1191.5,742.8 C1194,742.8 1196.5,742.2 1199,740.5 Z" fill="none" stroke="#f2f2f2" stroke-width="1.6"/>
<path d="M1199,743.5 C1200.8,744.5 1202.3,745 1203.8,745 C1203.6,749.5 1201.8,752 1199,753.3 C1196.2,752 1194.4,749.5 1194.2,745 C1195.7,745 1197.2,744.5 1199,743.5 Z" fill="#e8e8e8"/>
<!-- wifi -->
<path d="M1218.5,746 C1223,741.5 1229,741.5 1233.5,746" fill="none" stroke="#777" stroke-width="1.8"/>
<path d="M1220.6,748.3 C1223.8,745.2 1228.2,745.2 1231.4,748.3" fill="none" stroke="#f0f0f0" stroke-width="1.8"/>
<path d="M1222.8,750.6 C1224.8,748.8 1227.2,748.8 1229.2,750.6" fill="none" stroke="#f0f0f0" stroke-width="1.8"/>
<circle cx="1226" cy="753.4" r="1.5" fill="#f0f0f0"/>
<!-- volume -->
<path d="M1244,745 H1247 L1251,741 V754.7 L1247,750.7 H1244 Z" fill="#f0f0f0"/>
<path d="M1252.6,745.3 C1253.8,746.8 1253.8,749 1252.6,750.5" fill="none" stroke="#f0f0f0" stroke-width="1.5"/>
<path d="M1254.8,743.3 C1256.8,746 1256.8,749.8 1254.8,752.5" fill="none" stroke="#f0f0f0" stroke-width="1.5"/>
<path d="M1257,741.4 C1259.8,745.2 1259.8,750.6 1257,754.4" fill="none" stroke="#777" stroke-width="1.5"/>
<!-- battery -->
<path d="M1275.8,742.6 V741 H1280.6 V742.6" fill="none" stroke="#f0f0f0" stroke-width="1.5"/>
<path d="M1283.6,747.6 V742.6 H1272.8 V755.2 H1279.6" fill="none" stroke="#f0f0f0" stroke-width="1.6"/>
<path d="M1274.6,753.6 V749.6 L1280.8,745.2 V753.6 Z" fill="#b8b8b8"/>
<path d="M1283.4,747 L1279.4,752.6 H1282.2 L1280.8,756.6 L1286.8,750.6 H1283.8 L1285.6,747 Z" fill="#f0f0f0" stroke="#2e2e2e" stroke-width=".6"/>
<!-- show desktop -->
<rect x="1339" y="738" width="22" height="19" rx="1" fill="#67a9cc"/>
<rect x="1340" y="741.5" width="20" height="1" fill="#3e6e88"/>
</svg>
<div class="t" style="left:1021px;top:742px;font-size:13px;font-weight:bold;color:#eef2f6">58.0 °</div>
<div class="t" style="left:1097px;top:733px;font-size:13px;font-weight:bold;color:#eef2f6;letter-spacing:1px">0B</div>
<div class="t" style="left:1097px;top:750px;font-size:13px;font-weight:bold;color:#eef2f6;letter-spacing:1px">0B</div>
<div class="t" style="left:1295px;top:742px;font-size:13px;font-weight:bold;color:#eef2f6">13:59</div>

<!-- Livros popup -->
<div class="a" style="left:35px;top:175px;width:228px;height:39px;background:#000600"></div>
<div class="a" style="left:35px;top:170px;width:5px;height:5px;background:#383838"></div>
<div class="a" style="left:40px;top:170px;width:223px;height:5px;background:#000600"></div>
<div class="a" style="left:35px;top:175px;width:228px;height:39px;background:linear-gradient(90deg,#000800 0px,#010a00 30px,#031000 42px,#0a2700 58px,#0c2d00 85px,#0b2b00 112px,#071e00 132px,#021000 148px,#010b00 175px,#010a00 228px)"></div>
<div class="a" style="left:35px;top:170px;width:5px;height:5px;background:#383838"></div>
<div class="a" style="left:40px;top:170px;width:223px;height:5px;background:linear-gradient(90deg,#000800 0px,#010a00 25px,#031000 37px,#0a2700 53px,#0c2d00 80px,#0b2b00 107px,#071e00 127px,#021000 143px,#010b00 170px,#010a00 223px)"></div>
<div class="t" style="left:80px;top:175px;font-size:13px;color:#f2f2f2">Livros</div>

</body></html>
